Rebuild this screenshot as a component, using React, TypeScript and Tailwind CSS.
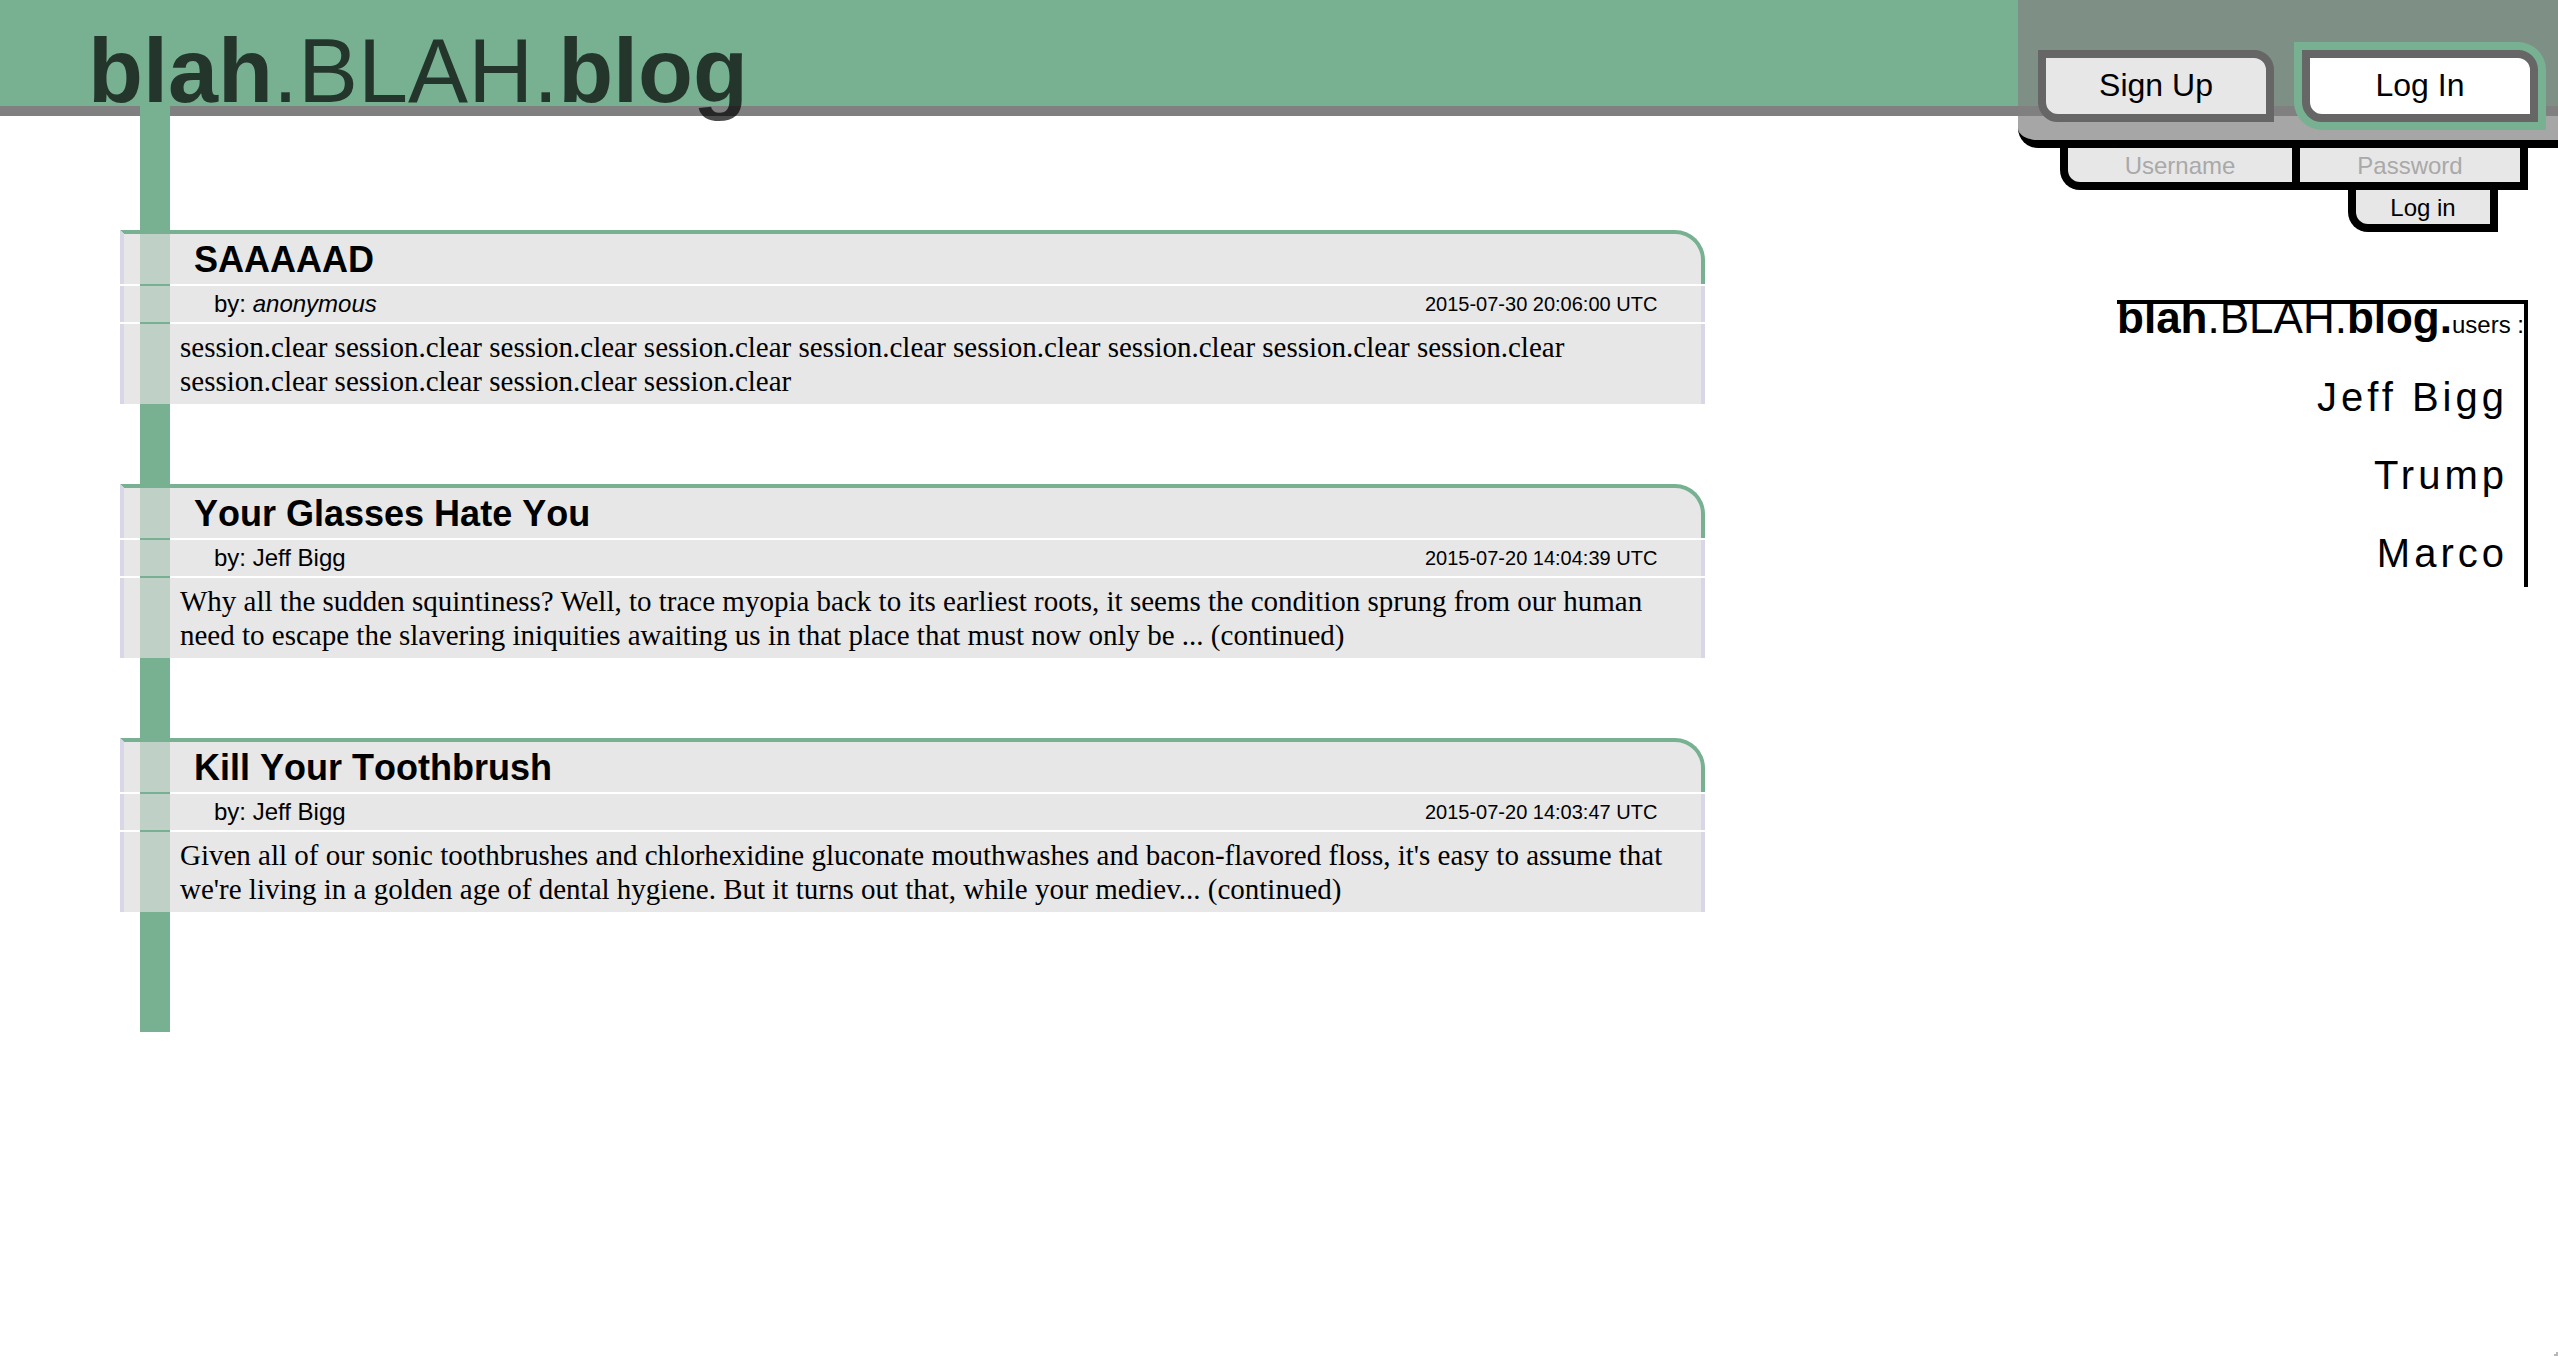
type Post = { title: string; author: string; anonymous?: boolean; date: string; body: string };

const posts: Post[] = [
  {
    title: "SAAAAAD",
    author: "anonymous",
    anonymous: true,
    date: "2015-07-30 20:06:00 UTC",
    body: "session.clear session.clear session.clear session.clear session.clear session.clear session.clear session.clear session.clear session.clear session.clear session.clear session.clear",
  },
  {
    title: "Your Glasses Hate You",
    author: "Jeff Bigg",
    date: "2015-07-20 14:04:39 UTC",
    body: "Why all the sudden squintiness? Well, to trace myopia back to its earliest roots, it seems the condition sprung from our human need to escape the slavering iniquities awaiting us in that place that must now only be ... (continued)",
  },
  {
    title: "Kill Your Toothbrush",
    author: "Jeff Bigg",
    date: "2015-07-20 14:03:47 UTC",
    body: "Given all of our sonic toothbrushes and chlorhexidine gluconate mouthwashes and bacon-flavored floss, it's easy to assume that we're living in a golden age of dental hygiene. But it turns out that, while your mediev... (continued)",
  },
];

const users = ["Jeff Bigg", "Trump", "Marco"];

function PostCard({ post }: { post: Post }) {
  return (
    <article className="flex flex-col gap-0.5">
      <h2 className="h-[54px] rounded-tr-[30px] border-x-4 border-t-4 border-[#78b192] border-l-[#d9d6e8] bg-[#dddddd]/70 bg-clip-padding pl-[70px] text-[36px] leading-[52px] font-bold [font-kerning:none]">
        {post.title}
      </h2>
      <div className="flex h-9 items-center justify-between border-x-4 border-[#d9d6e8] bg-[#dddddd]/70 bg-clip-padding pr-11 pl-[90px]">
        <p className="text-[24px] leading-9">
          by: {post.anonymous ? <em>{post.author}</em> : post.author}
        </p>
        <time className="text-[20px] leading-9">{post.date}</time>
      </div>
      <p className="border-x-4 border-[#d9d6e8] bg-[#dddddd]/70 bg-clip-padding py-[6px] pr-5 pl-14 font-['Liberation_Serif',serif] text-[29px] leading-[34px]">
        {post.body}
      </p>
    </article>
  );
}

function AccountPanel() {
  return (
    <div className="absolute top-0 right-0 flex w-[540px] flex-col">
      <div className="flex h-[148px] justify-end gap-7 rounded-bl-[20px] border-b-8 border-black bg-[#808080]/70 bg-clip-padding pt-[50px] pr-5">
        <button className="h-[72px] w-[236px] rounded-tr-[20px] rounded-bl-[20px] border-8 border-[#666666] bg-[#e7e7e7] pb-[2px] text-[32px] leading-8">
          Sign Up
        </button>
        <button className="h-[72px] w-[236px] rounded-tr-[20px] rounded-bl-[20px] border-8 border-[#666666] bg-white pb-[2px] text-[32px] leading-8 shadow-[0_0_0_8px_#78b192]">
          Log In
        </button>
      </div>
      <form className="mr-[30px] flex flex-col items-end">
        <div className="flex">
          <input
            aria-label="Username"
            placeholder="Username"
            className="h-[42px] w-[240px] rounded-bl-[20px] border-8 border-t-0 border-black bg-[#e7e7e7] pt-[2px] text-center text-[24px] placeholder:text-[#a9a9a9]"
          />
          <input
            aria-label="Password"
            type="password"
            placeholder="Password"
            className="h-[42px] w-[228px] border-r-8 border-b-8 border-black bg-[#e7e7e7] pt-[2px] text-center text-[24px] placeholder:text-[#a9a9a9]"
          />
        </div>
        <button
          type="button"
          className="mr-[30px] h-[42px] w-[150px] rounded-bl-[20px] border-8 border-t-0 border-black bg-[#e7e7e7] pt-[2px] text-[24px] leading-8"
        >
          Log in
        </button>
      </form>
    </div>
  );
}

function UserList() {
  return (
    <aside className="mt-[184px] mr-[30px] self-start border-t-4 border-r-4 border-black text-right">
      <h2 className="-mt-[6px] text-[44px] leading-[40px] whitespace-nowrap">
        <b>blah</b>.BLAH.<b>blog.</b>
        <span className="text-[24px]">users :</span>
      </h2>
      <ul className="mt-5 flex flex-col gap-[14px] pr-4 pb-[2px]">
        {users.map((user) => (
          <li key={user} className="text-[40px] leading-[64px] tracking-widest">
            <a href="#">{user}</a>
          </li>
        ))}
      </ul>
    </aside>
  );
}

export default function App() {
  return (
    <div className="relative min-h-screen bg-white font-['Liberation_Sans',Arial,sans-serif] text-black">
      <header className="h-[116px] border-b-[10px] border-[#808080] bg-[#78b192]">
        <h1 className="relative z-10 pl-[88px] text-[90px] leading-[142px] whitespace-nowrap text-black/70">
          <b>blah</b>.BLAH.<b>blog</b>
        </h1>
      </header>
      <div className="flex items-start justify-between">
        <main className="relative w-2/3 pb-[120px] pl-[120px]">
          <div className="absolute -top-[10px] bottom-0 left-[140px] w-[30px] bg-[#78b192]" />
          <div className="relative mt-[114px] flex flex-col gap-20">
            {posts.map((post) => (
              <PostCard key={post.title} post={post} />
            ))}
          </div>
        </main>
        <UserList />
      </div>
      <AccountPanel />
      <svg className="absolute right-0 bottom-0 h-1 w-1" viewBox="0 0 4 4" aria-hidden="true">
        <path d="M2 0H4V4H0V2H2Z" fill="#b8b8b8" />
      </svg>
    </div>
  );
}
